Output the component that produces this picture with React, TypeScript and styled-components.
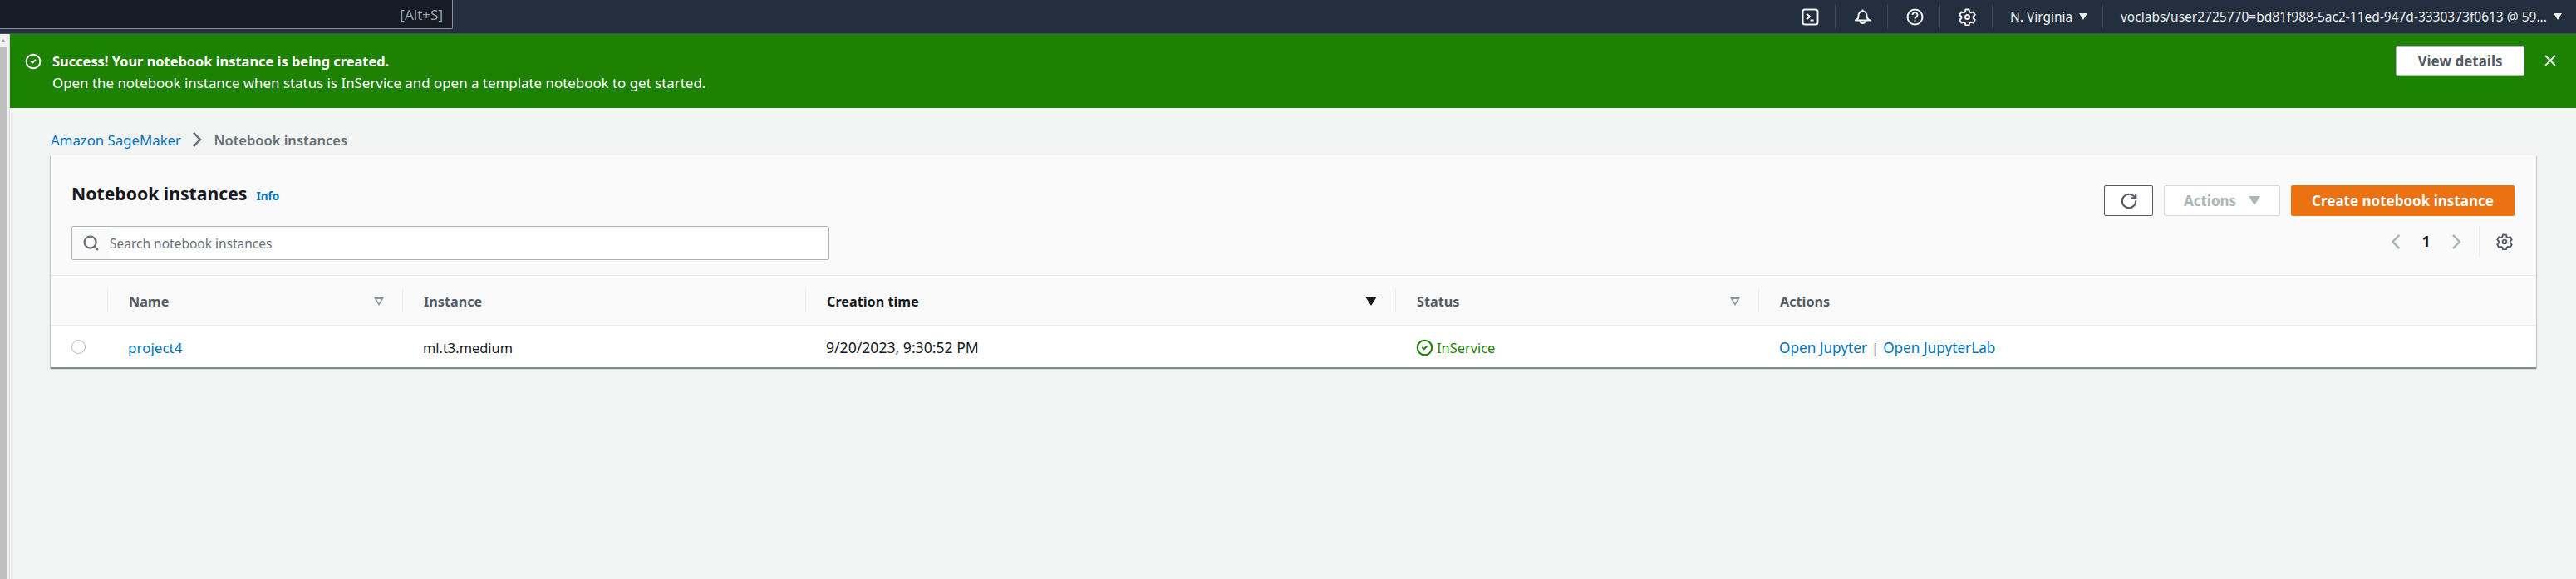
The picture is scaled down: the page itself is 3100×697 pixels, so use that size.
import styled, { createGlobalStyle } from "styled-components";
import { CircleCheck, RotateCw, Search, X } from "lucide-react";

const GlobalStyle = createGlobalStyle`
    html, body {
        margin: 0;
        padding: 0;
        background: #f2f3f3;
    }
    body {
        font-family: "Noto Sans", "Open Sans", sans-serif;
        font-size: 17px;
        color: #16191f;
    }
    * {
        box-sizing: border-box;
    }
`;

const Page = styled.div`
    width: 3100px;
    height: 697px;
    overflow: hidden;
    display: flex;
    flex-direction: column;
`;

const TopBar = styled.header`
    height: 41px;
    flex: none;
    background: #232f3e;
    border-bottom: 1px solid #414d5c;
    display: flex;
    align-items: flex-start;
`;

const SearchBox = styled.div`
    width: 545px;
    height: 35px;
    background: #161b26;
    border-right: 1px solid #879596;
    border-bottom: 1px solid #879596;
    border-bottom-right-radius: 2px;
    color: #95a5a6;
    font-size: 17px;
    display: flex;
    align-items: center;
    justify-content: flex-end;
    padding-right: 11px;
`;

const TopRight = styled.div`
    margin-left: auto;
    height: 40px;
    display: flex;
    align-items: center;
    color: #eaeded;
    font-size: 15.5px;
`;

const TopIcon = styled.div`
    width: 63px;
    height: 30px;
    padding-left: 3px;
    display: flex;
    align-items: center;
    justify-content: center;
    border-right: 1px solid #3a4757;
    color: #f2f3f3;
`;

const TopMenu = styled.div<{ $width: number; $last?: boolean }>`
    width: ${props => props.$width}px;
    height: 30px;
    display: flex;
    align-items: center;
    justify-content: flex-start;
    padding-left: 21px;
    white-space: nowrap;
    border-right: ${props => (props.$last ? "none" : "1px solid #3a4757")};
`;

const Caret = styled.span<{ $gap: number; $color?: string; $big?: boolean }>`
    width: 0;
    height: 0;
    margin-left: ${props => props.$gap}px;
    border-left: ${props => (props.$big ? 7 : 5)}px solid transparent;
    border-right: ${props => (props.$big ? 7 : 5)}px solid transparent;
    border-top: ${props => (props.$big ? 11 : 8)}px solid ${props => props.$color || "#eaeded"};
    flex: none;
`;

const Body = styled.div`
    flex: 1;
    display: flex;
    min-height: 0;
`;

const ScrollTrack = styled.div`
    width: 12px;
    flex: none;
    background: #f1f1f1;
    border-right: 1px solid #d5d8d8;
    display: flex;
    flex-direction: column;
    align-items: flex-start;
`;

const ScrollArrow = styled.div`
    width: 0;
    height: 0;
    margin: 6px 0 5px 1px;
    border-left: 3.5px solid transparent;
    border-right: 3.5px solid transparent;
    border-bottom: 4px solid #a3a3a3;
`;

const ScrollThumb = styled.div`
    width: 9px;
    flex: 1;
    background: #bfbfbf;
`;

const Main = styled.main`
    flex: 1;
    min-width: 0;
`;

const Flash = styled.div`
    height: 89px;
    background: #1d8102;
    color: #fff;
    display: flex;
    padding: 20px 18px 0 18px;
`;

const FlashIcon = styled.div`
    width: 33px;
    flex: none;
    padding-top: 3px;
`;

const FlashText = styled.div`
    flex: 1;
    font-size: 16.9px;
    line-height: 25px;
`;

const FlashTitle = styled.div`
    font-size: 16.4px;
    font-weight: 700;
    margin-bottom: 1px;
`;

const ViewDetails = styled.button`
    width: 155px;
    height: 36px;
    margin: -6px 20px 0 0;
    background: #fff;
    border: 1px solid #aab7b8;
    border-radius: 2px;
    color: #545b64;
    font: 700 17px "Noto Sans", sans-serif;
    padding: 0;
`;

const FlashClose = styled.div`
    color: #eaeded;
    width: 24px;
    margin-top: 1px;
`;

const Content = styled.div`
    padding: 0 48px 0 49px;
`;

const Crumbs = styled.nav`
    height: 57px;
    padding-top: 19px;
    display: flex;
    align-items: center;
    font-size: 16.8px;
    color: #687078;
`;

const CrumbLink = styled.a`
    color: #0073bb;
`;

const CrumbCurrent = styled.span`
    font-size: 16.5px;
    font-weight: 600;
`;

const CrumbSep = styled.span`
    color: #687078;
    display: flex;
    margin: 0 14px 0 13px;
`;

const Card = styled.section`
    background: #fafafa;
    box-shadow: 0 1px 1px 0 rgba(0, 28, 36, 0.3), 1px 1px 1px 0 rgba(0, 28, 36, 0.15), -1px 1px 1px 0 rgba(0, 28, 36, 0.15);
`;

const CardHeader = styled.div`
    height: 145px;
    padding: 36px 26px 0 25px;
    border-bottom: 1px solid #eaeded;
    display: flex;
    justify-content: space-between;
`;

const HeaderLeft = styled.div`
    display: flex;
    flex-direction: column;
`;

const TitleRow = styled.div`
    height: 49px;
    width: 912px;
    display: flex;
    align-items: baseline;
`;

const Title = styled.h1`
    margin: -4px 0 0;
    font-size: 21.2px;
    font-weight: 700;
    color: #16191f;
    line-height: 28px;
`;

const Info = styled.a`
    margin-left: 11px;
    font-size: 13.5px;
    font-weight: 700;
    color: #0073bb;
`;

const SearchField = styled.div`
    width: 912px;
    height: 41px;
    background: #fff;
    border: 1px solid #aab7b8;
    border-radius: 2px;
    display: flex;
    align-items: center;
    overflow: hidden;
`;

const SearchIconBox = styled.div`
    width: 45px;
    height: 100%;
    background: #fafafa;
    color: #687078;
    display: flex;
    align-items: center;
    justify-content: center;
`;

const Placeholder = styled.span`
    color: #687078;
    font-size: 15.5px;
`;

const HeaderRight = styled.div`
    display: flex;
    flex-direction: column;
    align-items: flex-end;
`;

const ButtonRow = styled.div`
    display: flex;
    gap: 13px;
`;

const RefreshButton = styled.button`
    width: 59px;
    height: 37px;
    background: #fff;
    border: 1px solid #545b64;
    border-radius: 2px;
    color: #545b64;
    display: flex;
    align-items: center;
    justify-content: center;
    padding: 0;
`;

const ActionsButton = styled.button`
    width: 140px;
    height: 37px;
    background: #fff;
    border: 1px solid #d5dbdb;
    border-radius: 2px;
    color: #aab7b8;
    font: 700 17px "Noto Sans", sans-serif;
    display: flex;
    align-items: center;
    justify-content: center;
    padding: 0;
`;

const CreateButton = styled.button`
    width: 269px;
    height: 37px;
    background: #ec7211;
    border: none;
    border-radius: 2px;
    color: #fff;
    font: 700 17px "Noto Sans", sans-serif;
    padding: 0;
`;

const PagerRow = styled.div`
    margin-top: 12px;
    height: 37px;
    display: flex;
    align-items: center;
    font-size: 17px;
    font-weight: 700;
`;

const PagerIcon = styled.span`
    color: #aab7b8;
    display: flex;
`;

const PageNumber = styled.span`
    width: 60px;
    text-align: center;
`;

const PagerDivider = styled.div`
    width: 1px;
    height: 37px;
    background: #eaeded;
    margin: 0 20px 0 21px;
`;

const GearWrap = styled.span`
    color: #545b64;
    display: flex;
    margin-right: 2px;
`;

const columns = "68px 355px 485px 710px 437px 1fr";

const TableHead = styled.div`
    display: grid;
    grid-template-columns: ${columns};
    height: 60px;
    align-items: center;
    border-bottom: 1px solid #eaeded;
`;

const HeadCell = styled.div<{ $sorted?: boolean }>`
    height: 29px;
    display: flex;
    align-items: center;
    justify-content: space-between;
    padding: 2px 22px 0 25px;
    font-size: 16.2px;
    font-weight: 700;
    color: ${props => (props.$sorted ? "#16191f" : "#545b64")};
    border-left: 1px solid #eaeded;
`;

const HeadBlank = styled.div``;

const FilterCaret = styled.span`
    width: 0;
    height: 0;
    border-left: 6px solid transparent;
    border-right: 6px solid transparent;
    border-top: 10px solid #879596;
    position: relative;
    &::after {
        content: "";
        position: absolute;
        left: -3px;
        top: -8px;
        border-left: 3px solid transparent;
        border-right: 3px solid transparent;
        border-top: 5px solid #fafafa;
    }
`;

const Row = styled.div`
    display: grid;
    grid-template-columns: ${columns};
    height: 51px;
    background: #fff;
    align-items: center;
    font-size: 16.4px;
    border-bottom: 1px solid #879596;
`;

const RadioCell = styled.div`
    padding-left: 25px;
    display: flex;
`;

const Radio = styled.span`
    width: 17px;
    height: 17px;
    border: 1px solid #aab7b8;
    border-radius: 50%;
    background: #fff;
`;

const Cell = styled.div<{ $size?: number }>`
    padding: 2px 0 0 25px;
    white-space: nowrap;
    display: flex;
    align-items: center;
    font-size: ${props => props.$size || 16.4}px;
`;

const TableLink = styled.a<{ $size?: number }>`
    color: #0073bb;
    font-size: ${props => props.$size || 17}px;
`;

const LinkBar = styled.span`
    margin: 0 5px;
`;

const StatusText = styled.span`
    color: #1d8102;
    margin-left: 4px;
`;

const StatusIcon = styled.span`
    color: #1d8102;
    display: flex;
`;

function TerminalIcon() {
    return (
        <svg width="21" height="21" viewBox="0 0 21 21" fill="none" stroke="currentColor" strokeWidth="2">
            <rect x="1.5" y="1.5" width="18" height="18" rx="2.5" />
            <path d="M6 6.5l4 3.5-4 3.5M10.5 14.5h4" />
        </svg>
    );
}

function BellIcon() {
    return (
        <svg width="21" height="21" viewBox="0 0 21 21" fill="none" stroke="currentColor" strokeWidth="2" strokeLinejoin="round">
            <path d="M10.5 1.5v1.5M5.5 9.5c0-3.5 2-6 5-6s5 2.500 5 6c0 2.500 1.500 4 3.500 5H2c2-1 3.500-2.500 3.500-5z" />
            <path d="M7.500 15a3 3 0 0 0 6 0" />
        </svg>
    );
}

function HelpIcon() {
    return (
        <svg width="21" height="21" viewBox="0 0 21 21" fill="none" stroke="currentColor" strokeWidth="2">
            <circle cx="10.5" cy="10.500" r="9" />
            <path d="M7.500 8a3 3 0 1 1 4.600 2.500c-1 .7-1.600 1.300-1.600 2.500" />
            <path d="M10.500 14.500v2" />
        </svg>
    );
}

function GearIcon({ size }: { size: number }) {
    return (
        <svg width={size} height={size} viewBox="0 0 21 21" fill="none" stroke="currentColor" strokeWidth="2" strokeLinejoin="round">
            <path d="M8.500 1.500h4l.7 2.800 1.800 1 2.700-.8 2 3.500-2 2 0 2 2 2-2 3.500-2.700-.8-1.800 1-.7 2.800h-4l-.7-2.800-1.800-1-2.700.8-2-3.500 2-2v-2l-2-2 2-3.500 2.700.8 1.800-1z" />
            <circle cx="10.500" cy="10.500" r="2.500" />
        </svg>
    );
}

function Chevron({ left, height }: { left?: boolean; height: number }) {
    return (
        <svg width={height * 0.62} height={height} viewBox="0 0 13 21" fill="none" stroke="currentColor" strokeWidth="2.600">
            <path d={left ? "M11 2L2.500 10.500 11 19" : "M2 2l8.500 8.500L2 19"} />
        </svg>
    );
}

function App() {
    return (
        <Page>
            <GlobalStyle />
            <TopBar>
                <SearchBox>[Alt+S]</SearchBox>
                <TopRight>
                    <TopIcon><TerminalIcon /></TopIcon>
                    <TopIcon><BellIcon /></TopIcon>
                    <TopIcon><HelpIcon /></TopIcon>
                    <TopIcon><GearIcon size={21} /></TopIcon>
                    <TopMenu $width={133}>N. Virginia<Caret $gap={8} /></TopMenu>
                    <TopMenu $width={569} $last>voclabs/user2725770=bd81f988-5ac2-11ed-947d-3330373f0613 @ 59...<Caret $gap={8} /></TopMenu>
                </TopRight>
            </TopBar>
            <Body>
                <ScrollTrack>
                    <ScrollArrow />
                    <ScrollThumb />
                </ScrollTrack>
                <Main>
                    <Flash>
                        <FlashIcon><CircleCheck size={20} strokeWidth={2.4} /></FlashIcon>
                        <FlashText>
                            <FlashTitle>Success! Your notebook instance is being created.</FlashTitle>
                            <div>Open the notebook instance when status is InService and open a template notebook to get started.</div>
                        </FlashText>
                        <ViewDetails>View details</ViewDetails>
                        <FlashClose><X size={22} strokeWidth={2} /></FlashClose>
                    </Flash>
                    <Content>
                        <Crumbs>
                            <CrumbLink>Amazon SageMaker</CrumbLink>
                            <CrumbSep><Chevron height={20} /></CrumbSep>
                            <CrumbCurrent>Notebook instances</CrumbCurrent>
                        </Crumbs>
                        <Card>
                            <CardHeader>
                                <HeaderLeft>
                                    <TitleRow>
                                        <Title>Notebook instances</Title>
                                        <Info>Info</Info>
                                    </TitleRow>
                                    <SearchField>
                                        <SearchIconBox><Search size={21} strokeWidth={2.5} /></SearchIconBox>
                                        <Placeholder>Search notebook instances</Placeholder>
                                    </SearchField>
                                </HeaderLeft>
                                <HeaderRight>
                                    <ButtonRow>
                                        <RefreshButton><RotateCw size={22} strokeWidth={2.4} /></RefreshButton>
                                        <ActionsButton>Actions<Caret $big $gap={15} $color="#aab7b8" /></ActionsButton>
                                        <CreateButton>Create notebook instance</CreateButton>
                                    </ButtonRow>
                                    <PagerRow>
                                        <PagerIcon><Chevron left height={20} /></PagerIcon>
                                        <PageNumber>1</PageNumber>
                                        <PagerIcon><Chevron height={20} /></PagerIcon>
                                        <PagerDivider />
                                        <GearWrap><GearIcon size={20} /></GearWrap>
                                    </PagerRow>
                                </HeaderRight>
                            </CardHeader>
                            <TableHead>
                                <HeadBlank />
                                <HeadCell>Name<FilterCaret /></HeadCell>
                                <HeadCell>Instance</HeadCell>
                                <HeadCell $sorted>Creation time<Caret $big $gap={0} $color="#16191f" /></HeadCell>
                                <HeadCell>Status<FilterCaret /></HeadCell>
                                <HeadCell>Actions</HeadCell>
                            </TableHead>
                            <Row>
                                <RadioCell><Radio /></RadioCell>
                                <Cell><TableLink>project4</TableLink></Cell>
                                <Cell>ml.t3.medium</Cell>
                                <Cell $size={17.6}>9/20/2023, 9:30:52 PM</Cell>
                                <Cell>
                                    <StatusIcon><CircleCheck size={21} strokeWidth={2.4} /></StatusIcon>
                                    <StatusText>InService</StatusText>
                                </Cell>
                                <Cell>
                                    <TableLink $size={17.2}>Open Jupyter</TableLink>
                                    <LinkBar>|</LinkBar>
                                    <TableLink $size={17.2}>Open JupyterLab</TableLink>
                                </Cell>
                            </Row>
                        </Card>
                    </Content>
                </Main>
            </Body>
        </Page>
    );
}

export default App;
